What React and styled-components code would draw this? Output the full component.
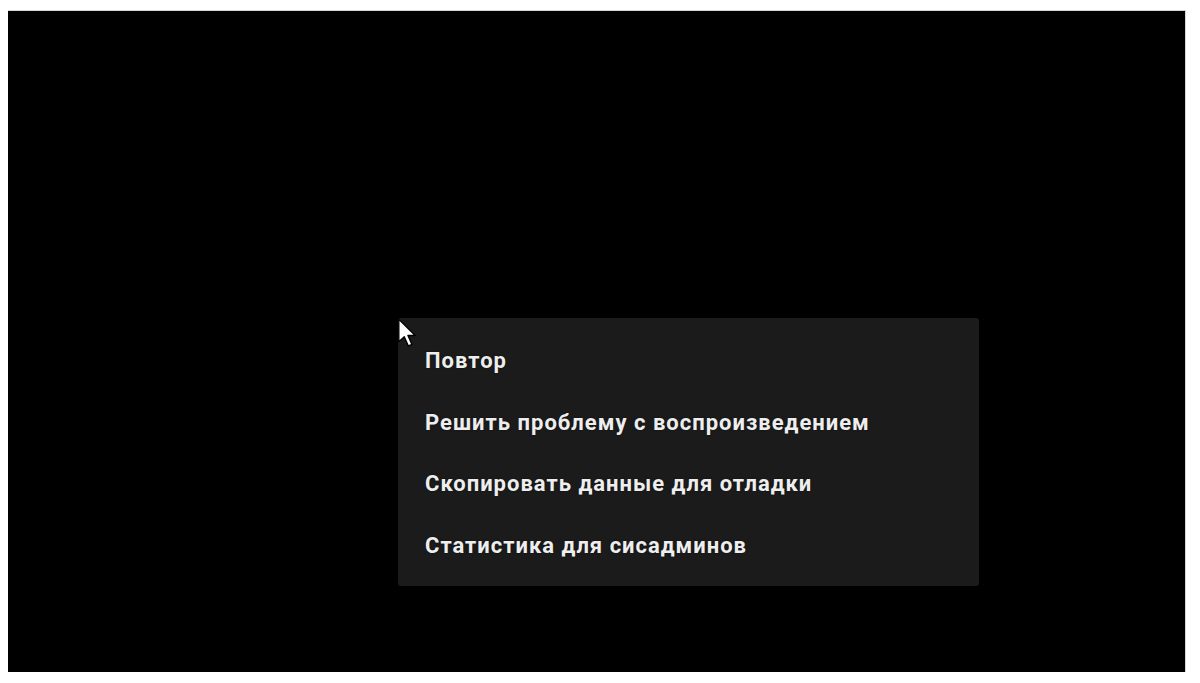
import React from 'react';
import styled, { createGlobalStyle } from 'styled-components';

const GlobalStyle = createGlobalStyle`
  html, body {
    margin: 0;
    background: #ffffff;
  }
  body {
    font-family: Roboto, "Noto Sans", Arial, sans-serif;
  }
`;

const items = [
  'Повтор',
  'Решить проблему с воспроизведением',
  'Скопировать данные для отладки',
  'Статистика для сисадминов',
];

function App() {
  return (
    <>
      <GlobalStyle />
      <Page>
        <Player>
          <Menu>
            {items.map(text => (
              <MenuItem key={text}>{text}</MenuItem>
            ))}
            <Cursor viewBox="0 0 14 22" aria-hidden="true">
              <path
                d="M1 1 L1 17.5 L5 13.8 L8 20.5 L10.6 19.4 L7.7 12.8 L13 12.8 Z"
                fill="#ffffff"
                stroke="#000000"
                strokeWidth="1"
                strokeLinejoin="round"
              />
            </Cursor>
          </Menu>
        </Player>
      </Page>
    </>
  );
}

const Page = styled.div`
  width: 1200px;
  height: 683px;
  box-sizing: border-box;
  padding: 10px 14px 11px 8px;
`;

const Player = styled.div`
  width: 100%;
  height: 100%;
  background: #000000;
  border-top: 1px solid #d6d6d6;
  border-right: 1px solid #d6d6d6;
  box-sizing: border-box;
  padding: 307px 0 0 390px;
`;

const Menu = styled.div`
  position: relative;
  width: 581px;
  height: 268px;
  box-sizing: border-box;
  padding: 12px 0 10px;
  background: #1b1b1b;
  border-radius: 3px;
  display: flex;
  flex-direction: column;
`;

const MenuItem = styled.div`
  height: 61.5px;
  display: flex;
  align-items: center;
  padding-left: 27px;
  color: #eeeeee;
  font-size: 22px;
  font-weight: 700;
  letter-spacing: 1px;
  text-shadow: 0 0 2px rgba(0, 0, 0, 0.5);
`;

const Cursor = styled.svg`
  position: absolute;
  left: -1px;
  top: 0px;
  width: 20px;
  height: 30px;
`;

export default App;
